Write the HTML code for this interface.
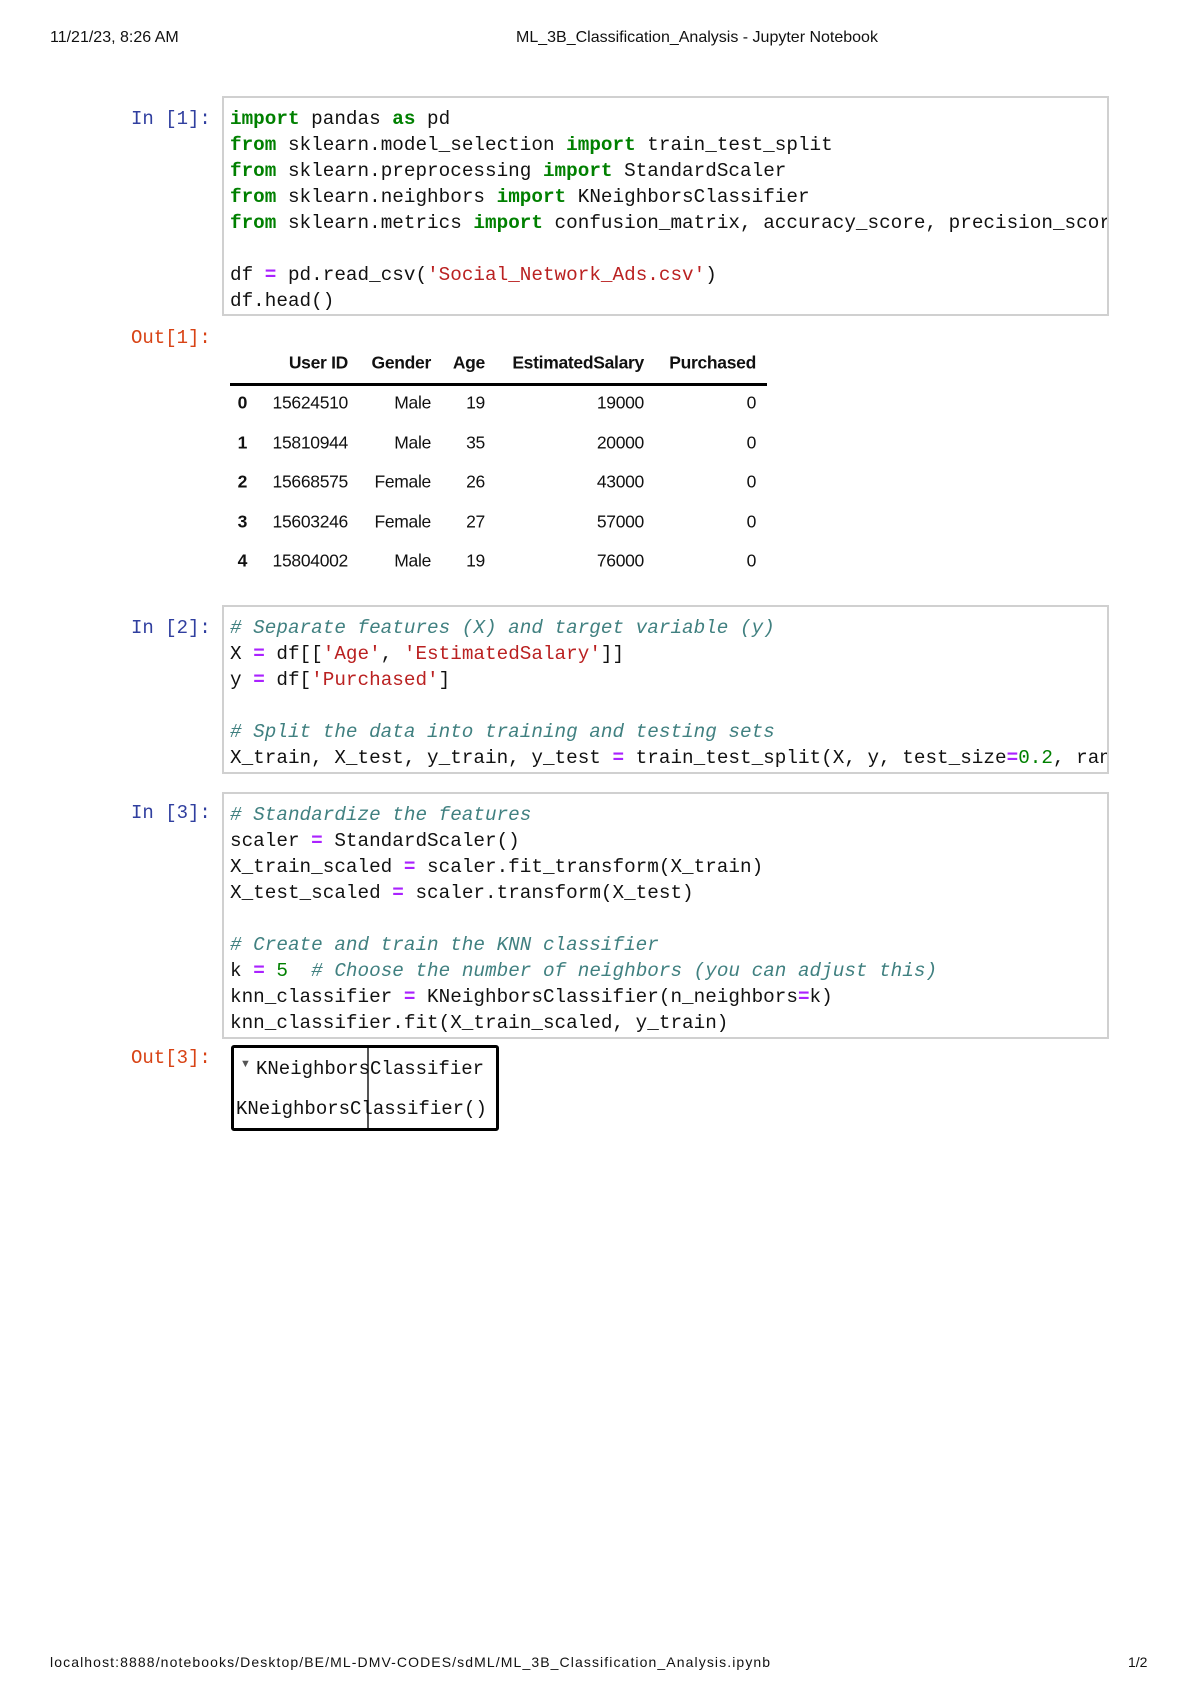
<!DOCTYPE html>
<html><head><meta charset="utf-8"><style>
body{margin:0;width:1200px;height:1698px;background:#fff;position:relative;overflow:hidden;font-family:"Liberation Sans",sans-serif}
.a{position:absolute;white-space:pre}
.hd{font-size:16px;color:#111}
.lbl{font-family:"Liberation Mono",monospace;font-size:19px;line-height:26px}
.in{color:#303F9F}.out{color:#D84315}
.box{position:absolute;left:222px;width:887px;border:2px solid #d0d0d0;box-sizing:border-box;background:#fff;overflow:hidden}
.code{position:absolute;left:6px;font-family:"Liberation Mono",monospace;font-size:19.3px;line-height:26px;white-space:pre;color:#111;letter-spacing:0.02px}
.k{color:#008000;font-weight:bold}.s{color:#BA2121}.c{color:#408080;font-style:italic}.o{color:#AA22FF;font-weight:bold}.n{color:#008000}
.t{position:absolute;font-size:17.5px;color:#111;transform:translateY(-50%);white-space:nowrap;letter-spacing:-0.3px}
.th{font-weight:bold}
</style></head><body>
<div class="a hd" style="left:50px;top:29px">11/21/23, 8:26 AM</div>
<div class="a hd" style="left:516px;top:29px">ML_3B_Classification_Analysis - Jupyter Notebook</div>

<div class="a lbl in" style="left:131px;top:106px">In [1]:</div>
<div class="box" style="top:96px;height:220px">
<div class="code" style="top:8px"><span class="k">import</span> pandas <span class="k">as</span> pd
<span class="k">from</span> sklearn.model_selection <span class="k">import</span> train_test_split
<span class="k">from</span> sklearn.preprocessing <span class="k">import</span> StandardScaler
<span class="k">from</span> sklearn.neighbors <span class="k">import</span> KNeighborsClassifier
<span class="k">from</span> sklearn.metrics <span class="k">import</span> confusion_matrix, accuracy_score, precision_score

df <span class="o">=</span> pd.read_csv(<span class="s">'Social_Network_Ads.csv'</span>)
df.head()</div></div>

<div class="a lbl out" style="left:131px;top:325px">Out[1]:</div>
<div class="t th" style="right:852px;top:363px">User ID</div>
<div class="t th" style="right:769px;top:363px">Gender</div>
<div class="t th" style="right:715px;top:363px">Age</div>
<div class="t th" style="right:556px;top:363px">EstimatedSalary</div>
<div class="t th" style="right:444px;top:363px">Purchased</div>
<div class="a" style="left:230px;top:383px;width:537px;height:3px;background:#000"></div>

<div class="t th" style="right:953px;top:403px">0</div><div class="t" style="right:852px;top:403px">15624510</div><div class="t" style="right:769px;top:403px">Male</div><div class="t" style="right:715px;top:403px">19</div><div class="t" style="right:556px;top:403px">19000</div><div class="t" style="right:444px;top:403px">0</div>
<div class="t th" style="right:953px;top:443px">1</div><div class="t" style="right:852px;top:443px">15810944</div><div class="t" style="right:769px;top:443px">Male</div><div class="t" style="right:715px;top:443px">35</div><div class="t" style="right:556px;top:443px">20000</div><div class="t" style="right:444px;top:443px">0</div>
<div class="t th" style="right:953px;top:482px">2</div><div class="t" style="right:852px;top:482px">15668575</div><div class="t" style="right:769px;top:482px">Female</div><div class="t" style="right:715px;top:482px">26</div><div class="t" style="right:556px;top:482px">43000</div><div class="t" style="right:444px;top:482px">0</div>
<div class="t th" style="right:953px;top:522px">3</div><div class="t" style="right:852px;top:522px">15603246</div><div class="t" style="right:769px;top:522px">Female</div><div class="t" style="right:715px;top:522px">27</div><div class="t" style="right:556px;top:522px">57000</div><div class="t" style="right:444px;top:522px">0</div>
<div class="t th" style="right:953px;top:561px">4</div><div class="t" style="right:852px;top:561px">15804002</div><div class="t" style="right:769px;top:561px">Male</div><div class="t" style="right:715px;top:561px">19</div><div class="t" style="right:556px;top:561px">76000</div><div class="t" style="right:444px;top:561px">0</div>

<div class="a lbl in" style="left:131px;top:615px">In [2]:</div>
<div class="box" style="top:605px;height:169px">
<div class="code" style="top:8px"><span class="c"># Separate features (X) and target variable (y)</span>
X <span class="o">=</span> df[[<span class="s">'Age'</span>, <span class="s">'EstimatedSalary'</span>]]
y <span class="o">=</span> df[<span class="s">'Purchased'</span>]

<span class="c"># Split the data into training and testing sets</span>
X_train, X_test, y_train, y_test <span class="o">=</span> train_test_split(X, y, test_size<span class="o">=</span><span class="n">0.2</span>, random_state<span class="o">=</span><span class="n">42</span>)</div></div>

<div class="a lbl in" style="left:131px;top:800px">In [3]:</div>
<div class="box" style="top:792px;height:247px">
<div class="code" style="top:8px"><span class="c"># Standardize the features</span>
scaler <span class="o">=</span> StandardScaler()
X_train_scaled <span class="o">=</span> scaler.fit_transform(X_train)
X_test_scaled <span class="o">=</span> scaler.transform(X_test)

<span class="c"># Create and train the KNN classifier</span>
k <span class="o">=</span> <span class="n">5</span>  <span class="c"># Choose the number of neighbors (you can adjust this)</span>
knn_classifier <span class="o">=</span> KNeighborsClassifier(n_neighbors<span class="o">=</span>k)
knn_classifier.fit(X_train_scaled, y_train)</div></div>

<div class="a lbl out" style="left:131px;top:1045px">Out[3]:</div>
<div class="a" style="left:231px;top:1045px;width:268px;height:86px;border:3px solid #000;border-radius:3px;box-sizing:border-box;overflow:hidden">
<div class="a" style="left:133px;top:0;width:2px;height:86px;background:#555"></div>
<div class="a" style="left:6px;top:10px;font-size:11px;color:#555">▼</div>
<div class="code" style="left:22px;top:8px;font-size:19px;letter-spacing:0">KNeighborsClassifier</div>
<div class="code" style="left:2px;top:48px;font-size:19px;letter-spacing:0">KNeighborsClassifier()</div>
</div>

<div class="a hd" style="left:50px;top:1654px;font-size:14px;letter-spacing:1.1px">localhost:8888/notebooks/Desktop/BE/ML-DMV-CODES/sdML/ML_3B_Classification_Analysis.ipynb</div>
<div class="a hd" style="left:1128px;top:1654px;font-size:14px">1/2</div>
</body></html>
